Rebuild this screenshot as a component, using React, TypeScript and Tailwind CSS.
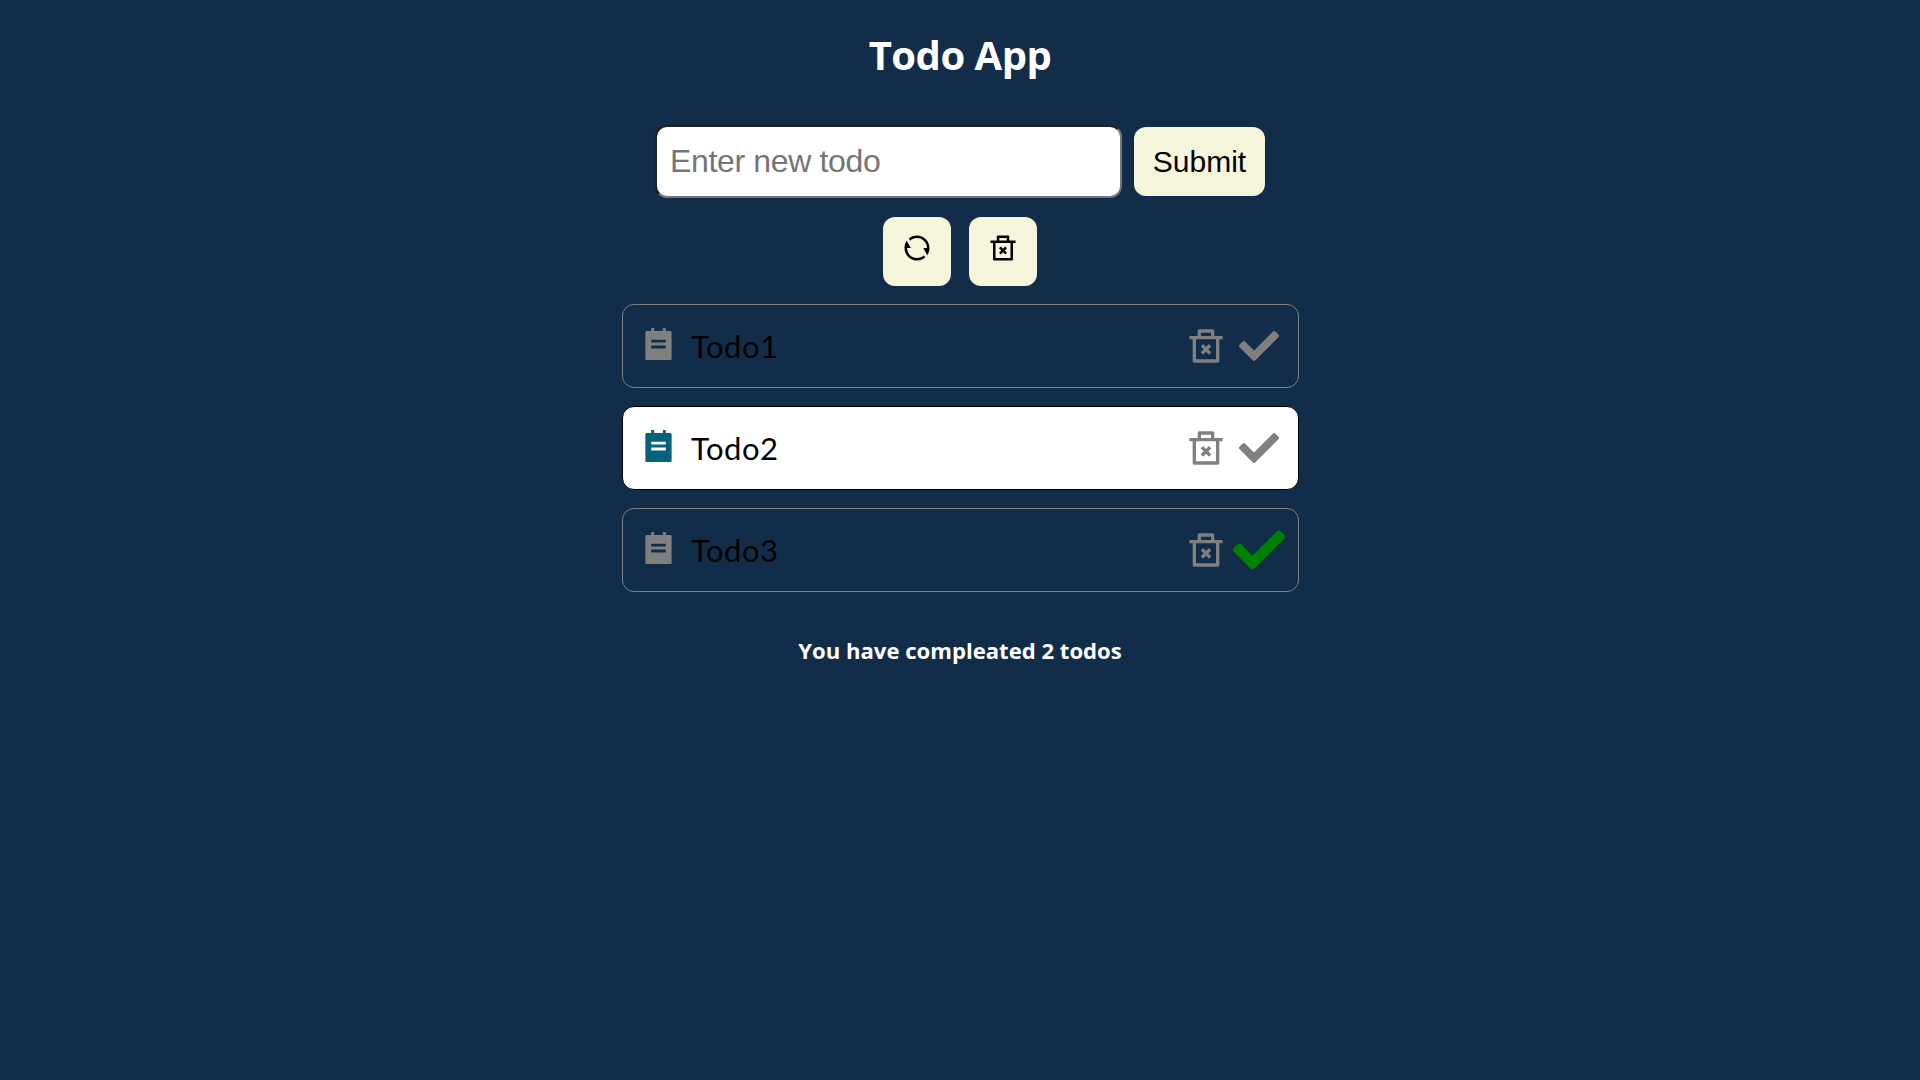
import { RiTodoFill, RiRefreshLine, RiDeleteBin2Line } from 'react-icons/ri';
import { FaCheck } from 'react-icons/fa';

type Todo = { id: number; text: string; done: boolean; active: boolean };

const todos: Todo[] = [
  { id: 1, text: 'Todo1', done: true, active: false },
  { id: 2, text: 'Todo2', done: false, active: true },
  { id: 3, text: 'Todo3', done: true, active: false },
];

function TodoItem({ todo, hovered }: { todo: Todo; hovered: boolean }) {
  return (
    <li
      className={`flex h-[84px] w-full items-start rounded-xl border pl-[18px] pr-[19px] pt-[21px] ${
        todo.active ? 'border-black bg-white' : 'border-[#808080]'
      }`}
    >
      <RiTodoFill size={35} className={`mt-[2px] ${todo.active ? 'text-[#05627c]' : 'text-[#808080]'}`} />
      <span className="ml-[15px] grow font-['Lato',sans-serif] text-[31px] leading-10 tracking-[0.5px] text-black">
        {todo.text}
      </span>
      <RiDeleteBin2Line size={40} className="text-[#808080]" />
      <FaCheck size={40} className={`ml-[13px] ${hovered ? 'scale-130 text-[#008000]' : 'text-[#808080]'}`} />
    </li>
  );
}

export default function App() {
  return (
    <main className="flex min-h-screen flex-col items-center bg-[#122d49]">
      <h1 className="mt-[27px] font-['Open_Sans',sans-serif] text-[40px] leading-[56px] font-bold tracking-[-0.5px] text-white">
        Todo App
      </h1>
      <form className="mt-[42px] flex items-start gap-3">
        <input
          placeholder="Enter new todo"
          className="h-[73px] w-[467px] rounded-xl border-2 border-t-[#212121] border-r-[#767676] border-b-[#767676] border-l-[#212121] bg-white px-[13px] font-['Liberation_Sans',sans-serif] text-[32px] tracking-[-0.35px] placeholder:text-[#757575]"
        />
        <button
          type="button"
          className="mt-[2px] h-[69px] w-[131px] rounded-xl bg-[#f5f5dc] font-['Liberation_Sans',sans-serif] text-[30px] text-black"
        >
          Submit
        </button>
      </form>
      <div className="mt-[19px] flex gap-[18px]">
        <button type="button" className="flex h-[69px] w-[68px] justify-center rounded-xl bg-[#f5f5dc] pt-4 text-black">
          <RiRefreshLine size={30} />
        </button>
        <button type="button" className="flex h-[69px] w-[68px] justify-center rounded-xl bg-[#f5f5dc] pt-4 text-black">
          <RiDeleteBin2Line size={30} />
        </button>
      </div>
      <ul className="mt-[18px] ml-px flex w-[677px] flex-col gap-[18px]">
        {todos.map((todo) => (
          <TodoItem key={todo.id} todo={todo} hovered={todo.id === 3} />
        ))}
      </ul>
      <h2 className="mt-[42px] font-['Open_Sans',sans-serif] text-[22.1px] leading-8 font-bold text-white">
        You have compleated 2 todos
      </h2>
    </main>
  );
}
